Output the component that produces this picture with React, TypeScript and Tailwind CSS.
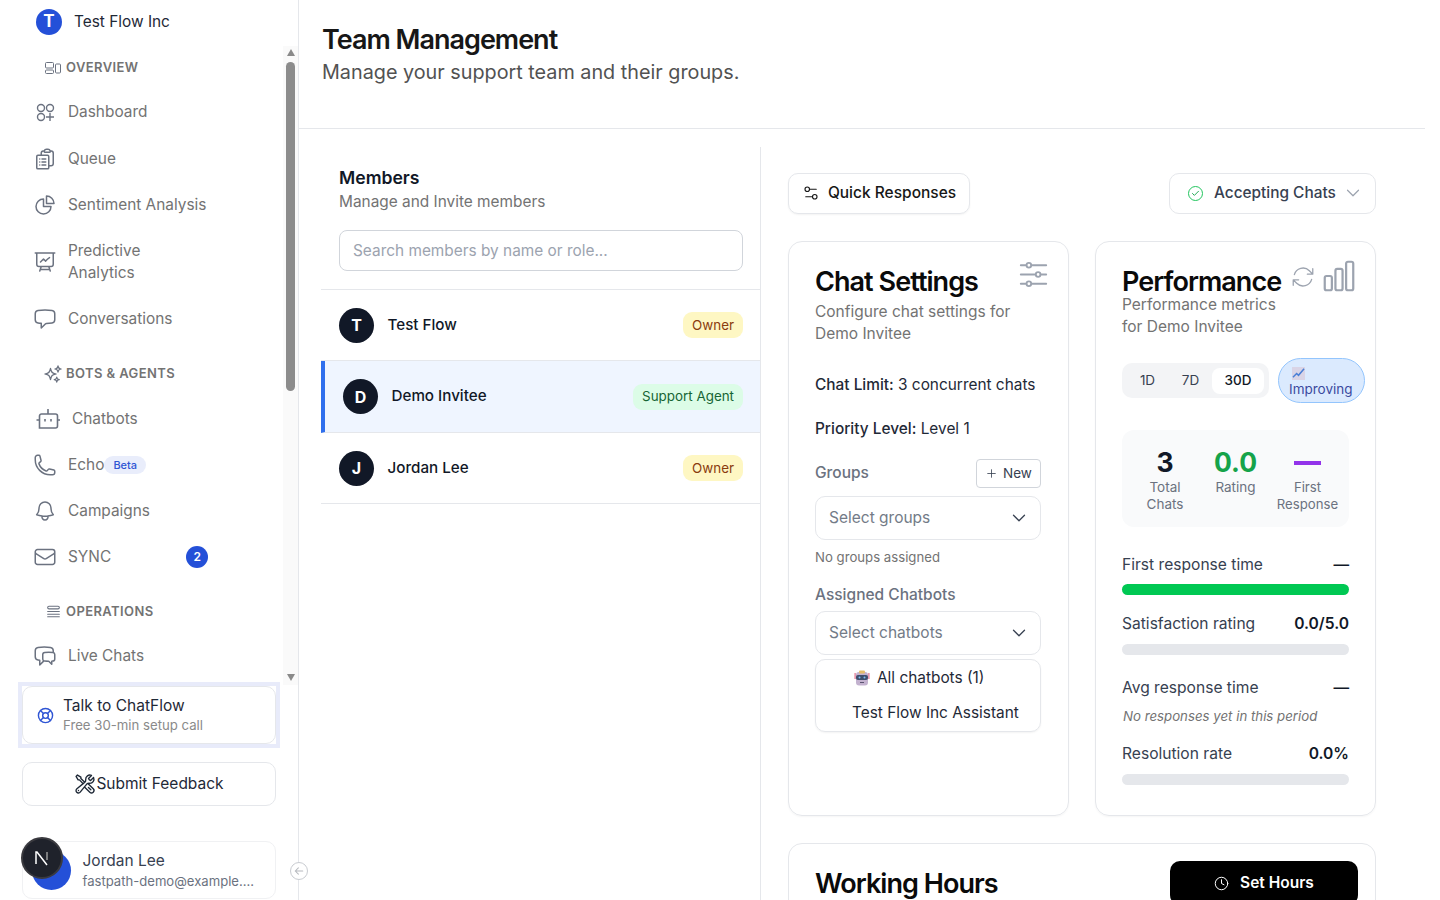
import { Check, ChevronDown, Clock, LifeBuoy, Plus, Settings2 } from 'lucide-react';
import {
  HiOutlineAdjustmentsHorizontal,
  HiOutlineArrowLeft,
  HiOutlineArrowPath,
  HiOutlineBell,
  HiOutlineChartBar,
  HiOutlineChartPie,
  HiOutlineChatBubbleLeft,
  HiOutlineChatBubbleLeftRight,
  HiOutlineClipboardDocumentList,
  HiOutlineEnvelope,
  HiOutlinePhone,
  HiOutlinePresentationChartLine,
  HiOutlineQueueList,
  HiOutlineSparkles,
  HiOutlineWrenchScrewdriver,
} from 'react-icons/hi2';
import type { ReactNode } from 'react';

function DashIcon() {
  return (
    <svg viewBox="0 0 24 24" fill="none" stroke="currentColor" strokeWidth="1.4" className="h-[24px] w-[24px] shrink-0">
      <circle cx="8" cy="8" r="3.5" />
      <circle cx="17" cy="8" r="3.5" />
      <circle cx="8" cy="17" r="3.5" />
      <path d="M17 13v8M13 17h8" />
    </svg>
  );
}

function OverviewIcon() {
  return (
    <svg viewBox="0 0 16 12" fill="none" stroke="currentColor" strokeWidth="1" className="h-[12px] w-[16px] shrink-0">
      <rect x="0.5" y="0.5" width="8" height="5.5" rx="1" />
      <rect x="0.5" y="8" width="8" height="3.5" rx="1" />
      <rect x="10.5" y="2" width="5" height="9" rx="1" />
    </svg>
  );
}

function BotIcon() {
  return (
    <svg viewBox="0 0 24 22" fill="none" stroke="currentColor" strokeWidth="1.6" className="h-[22px] w-[24px] shrink-0">
      <path d="M12 1v5" />
      <path d="M5.5 6h14a2 2 0 0 1 2 2v10a2 2 0 0 1-2 2H3.5V8a2 2 0 0 1 2-2z" />
      <path d="M0.5 12h3M21.5 12h2.5" />
      <path d="M9 11v2.5M15 11v2.5" />
    </svg>
  );
}

function NextLogo() {
  return (
    <svg viewBox="0 0 16 16" fill="none" className="h-[16px] w-[16px]">
      <path d="M2 14V2h1l10 13" stroke="#fff" strokeWidth="1.5" />
      <path d="M13 2v8" stroke="#9a9a9a" strokeWidth="1.5" />
    </svg>
  );
}

function RobotEmoji() {
  return (
    <svg viewBox="0 0 16 16" className="h-[16px] w-[16px] shrink-0">
      <rect x="0.5" y="3" width="1.2" height="6" fill="#e0708c" />
      <rect x="14.3" y="3" width="1.2" height="6" fill="#e0708c" />
      <rect x="2" y="2" width="12" height="13.5" rx="3" fill="#c3b2cf" />
      <rect x="5" y="0.5" width="6" height="3" rx="1" fill="#e6bd6a" />
      <rect x="2" y="5" width="12" height="5" rx="2" fill="#3f4f6d" />
      <circle cx="5.5" cy="7.5" r="1" fill="#7cc0f0" />
      <circle cx="10.5" cy="7.5" r="1" fill="#7cc0f0" />
      <rect x="6" y="12" width="4" height="1" fill="#5c5470" />
    </svg>
  );
}

function NavItem({ icon, label, h = 'h-[46px]', children }: { icon: ReactNode; label: ReactNode; h?: string; children?: ReactNode }) {
  return (
    <div className={`flex items-center pl-[36px] text-[#6b7280] ${h}`}>
      <span className="-ml-[3px] flex w-[35px] shrink-0 items-center">{icon}</span>
      <span className="text-[15.4px] leading-[22px] text-[#737373]">{label}</span>
      {children}
    </div>
  );
}

function SectionLabel({ icon, label, className }: { icon: ReactNode; label: string; className: string }) {
  return (
    <div className={`flex items-center pl-[45px] text-[#6b7280] ${className}`}>
      <span className="flex w-[21px] shrink-0 items-center">{icon}</span>
      <span className="text-[13px] font-semibold tracking-[0.4px] text-[#737373]">{label}</span>
    </div>
  );
}

function Sidebar() {
  const ic = 'h-[24px] w-[24px] shrink-0';
  return (
    <aside className="relative flex h-[900px] w-[299px] shrink-0 flex-col border-r border-[#e5e7eb] bg-white">
      <div className="flex h-[46px] shrink-0 items-center pb-[2px] pl-[36px]">
        <div className="flex h-[26px] w-[26px] items-center justify-center rounded-full bg-[#2450d8] text-[17px] font-bold text-white">T</div>
        <span className="ml-[12px] text-[15.4px] text-[#1f2937]">Test Flow Inc</span>
      </div>
      <div className="flex h-[636px] shrink-0">
        <nav className="h-full w-[283px] overflow-hidden">
          <SectionLabel icon={<OverviewIcon />} label="OVERVIEW" className="h-[43px]" />
          <NavItem icon={<DashIcon />} label="Dashboard" />
          <NavItem icon={<HiOutlineClipboardDocumentList className={ic} />} label="Queue" h="h-[47px]" />
          <NavItem icon={<HiOutlineChartPie className={ic} />} label="Sentiment Analysis" />
          <NavItem icon={<HiOutlinePresentationChartLine className={ic} />} label={<>Predictive<br />Analytics</>} h="h-[66px] pt-[2px]" />
          <NavItem icon={<HiOutlineChatBubbleLeft className={ic} />} label="Conversations" h="mt-[2px] h-[46px]" />
          <SectionLabel icon={<HiOutlineSparkles className="-ml-[2px] h-[20px] w-[20px]" />} label="BOTS & AGENTS" className="mt-[9px] h-[45px]" />
          <div className="flex h-[46px] items-center pl-[36px] text-[#6b7280]">
            <span className="flex w-[36px] shrink-0 items-center"><BotIcon /></span>
            <span className="text-[15.4px] text-[#737373]">Chatbots</span>
          </div>
          <NavItem icon={<HiOutlinePhone className={ic} />} label="Echo">
            <span className="rounded-full bg-[#e9edfb] px-[9px] py-[1px] text-[11px] font-medium text-[#2f55d4]">Beta</span>
          </NavItem>
          <NavItem icon={<HiOutlineBell className={ic} />} label="Campaigns" />
          <NavItem icon={<HiOutlineEnvelope className={ic} />} label="SYNC">
            <span className="ml-[75px] flex h-[22px] w-[22px] items-center justify-center rounded-full bg-[#2450d8] text-[12px] font-semibold text-white">2</span>
          </NavItem>
          <SectionLabel icon={<HiOutlineQueueList className="h-[17px] w-[17px]" />} label="OPERATIONS" className="mt-[10px] h-[43px]" />
          <NavItem icon={<HiOutlineChatBubbleLeftRight className={ic} />} label="Live Chats" />
        </nav>
        <div className="flex h-[639px] w-[15px] shrink-0 flex-col items-center bg-[#fafafa]">
          <div className="mt-[3px] h-0 w-0 border-x-[4.5px] border-b-[7px] border-x-transparent border-b-[#8a8a8a]" />
          <div className="mt-[6px] h-[329px] w-[9px] rounded-full bg-[#8c8c8c]" />
          <div className="mt-auto mb-[4px] h-0 w-0 border-x-[4.5px] border-t-[7px] border-x-transparent border-t-[#8a8a8a]" />
        </div>
      </div>
      <div className="mx-[18px] box-border h-[66px] w-[262px] border-[4px] border-[#e8ebfa] bg-white">
        <div className="flex h-full items-center rounded-[10px] border border-[#e5e7eb] pl-[14px]">
          <LifeBuoy className="h-[17px] w-[17px] text-[#2f55d4]" strokeWidth={2} />
          <div className="ml-[9px]">
            <div className="text-[15.5px] leading-[20px] text-[#1f2937]">Talk to ChatFlow</div>
            <div className="text-[13.2px] leading-[18px] text-[#8a8a8a]">Free 30-min setup call</div>
          </div>
        </div>
      </div>
      <div className="mx-[22px] mt-[14px] flex h-[44px] w-[254px] items-center justify-center rounded-[10px] border border-[#e5e7eb] text-[15.5px] text-[#1f2937]">
        <HiOutlineWrenchScrewdriver className="h-[22px] w-[22px]" />
        <span>Submit Feedback</span>
      </div>
      <div className="mx-[22px] mt-[35px] flex h-[58px] w-[254px] items-center rounded-[10px] border border-[#f0f1f3] pl-[59.5px] pt-[2px]">
        <div>
          <div className="text-[15.5px] leading-[20px] text-[#374151]">Jordan Lee</div>
          <div className="w-[180px] text-[13.1px] leading-[20px] text-[#6b7280]">fastpath-demo@example....</div>
        </div>
      </div>
      <div className="absolute left-[32px] top-[851px] h-[39px] w-[39px] rounded-full bg-[#2450d8]" />
      <div className="absolute left-[21px] top-[837px] flex h-[42px] w-[42px] items-center justify-center rounded-full border-2 border-[#3a3a3f] bg-[#1f222b]">
        <NextLogo />
      </div>
      <div className="absolute left-[290px] top-[862px] flex h-[18px] w-[18px] items-center justify-center rounded-full border border-[#c9ccd1] bg-white text-[#b5b8bd]">
        <HiOutlineArrowLeft className="h-[10px] w-[10px]" strokeWidth={2.5} />
      </div>
    </aside>
  );
}

function Member({ initial, name, role, active }: { initial: string; name: string; role: string; active?: boolean }) {
  const badge = role === 'Owner' ? 'bg-[#fef7c3] text-[#8a3c0e]' : 'bg-[#dcfce7] text-[#166534]';
  return (
    <div className={`flex items-center border-b border-[#e5e7eb] pl-[18px] pr-[17px] ${active ? 'h-[72px] border-l-[4px] border-l-[#2f6fed] bg-[#eff5ff]' : 'h-[71px]'}`}>
      <div className="flex h-[35px] w-[35px] items-center justify-center rounded-full bg-[#111827] text-[16px] font-bold text-white">{initial}</div>
      <span className="ml-[13.5px] text-[15.2px] font-[450] text-[#111827]">{name}</span>
      <span className={`ml-auto flex h-[26px] items-center rounded-[9px] px-[9px] text-[13.4px] ${badge}`}>{role}</span>
    </div>
  );
}

function Select({ label }: { label: string }) {
  return (
    <div className="flex h-[44px] items-center justify-between rounded-[10px] border border-[#e5e7eb] pl-[13px] pr-[10px]">
      <span className="text-[15.5px] text-[#737b87]">{label}</span>
      <ChevronDown className="h-[22px] w-[22px] text-[#374151]" strokeWidth={1.4} />
    </div>
  );
}

function ChatSettings() {
  return (
    <section className="h-[575px] w-[281px] rounded-[14px] border border-[#e5e7eb] pl-[26px] pr-[27px] pt-[22px] shadow-[0_1px_2px_rgba(0,0,0,0.04)]">
      <div className="flex h-[36px] items-start justify-between">
        <h3 className="text-[27px] font-semibold leading-[36px] tracking-[-0.95px] text-[#0a0a0a]">Chat Settings</h3>
        <HiOutlineAdjustmentsHorizontal className="-mr-[11px] -mt-[8px] h-[37px] w-[37px] shrink-0 text-[#9ca3af]" strokeWidth={1.2} />
      </div>
      <p className="mt-[1px] text-[15.5px] leading-[22px] text-[#737373]">Configure chat settings for<br />Demo Invitee</p>
      <p className="mt-[29px] text-[15.4px] leading-[22px] text-[#1f2937]"><span className="font-medium">Chat Limit:</span> 3 concurrent chats</p>
      <p className="mt-[22px] text-[15.4px] leading-[22px] text-[#1f2937]"><span className="font-medium">Priority Level:</span> Level 1</p>
      <div className="mt-[19px] flex items-center justify-between">
        <span className="pb-[2px] text-[15.5px] font-medium text-[#6b7280]">Groups</span>
        <span className="flex h-[29px] w-[65px] items-center justify-center gap-[5px] rounded-[4px] border border-[#d1d5db] text-[13.5px] text-[#374151]">
          <Plus className="h-[13px] w-[13px]" strokeWidth={1.5} />New
        </span>
      </div>
      <div className="mt-[8px]"><Select label="Select groups" /></div>
      <p className="mt-[8px] text-[13.2px] leading-[18px] text-[#737373]">No groups assigned</p>
      <p className="mt-[18px] text-[15.5px] font-medium leading-[22px] text-[#6b7280]">Assigned Chatbots</p>
      <div className="mt-[5px]"><Select label="Select chatbots" /></div>
      <div className="mt-[4px] h-[73px] rounded-[10px] border border-[#e5e7eb] pl-[36px] pt-[6px] text-[15.4px] text-[#1f2937] shadow-[0_1px_2px_rgba(0,0,0,0.05)]">
        <div className="flex h-[24px] items-center gap-[7px] pl-[2px]">
          <RobotEmoji />
          <span>All chatbots (1)</span>
        </div>
        <div className="mt-[12px] leading-[22px]">Test Flow Inc Assistant</div>
      </div>
    </section>
  );
}

function Metric({ label, value, bar }: { label: string; value: string; bar?: boolean }) {
  return (
    <div>
      <div className="flex items-center justify-between text-[15.6px] leading-[22px]">
        <span className="text-[#374151]">{label}</span>
        <span className="font-semibold text-[#111827]">{value}</span>
      </div>
      {bar === true && <div className="mt-[8px] h-[11px] rounded-full bg-[#00c853]" />}
      {bar === false && <div className="mt-[9px] h-[11px] rounded-full bg-[#e5e7eb]" />}
    </div>
  );
}

function Performance() {
  return (
    <section className="h-[575px] w-[281px] rounded-[14px] border border-[#e5e7eb] pl-[26px] pr-[26px] pt-[28px] shadow-[0_1px_2px_rgba(0,0,0,0.04)]">
      <div className="flex h-[24px] items-start">
        <h3 className="shrink-0 text-[27px] font-semibold leading-[24px] tracking-[-0.95px] text-[#0a0a0a]">Performance</h3>
        <HiOutlineArrowPath className="ml-[9px] -mt-[6px] h-[26px] w-[26px] shrink-0 text-[#9ca3af]" strokeWidth={1.2} />
        <HiOutlineChartBar className="ml-[4px] -mt-[13px] h-[38px] w-[38px] shrink-0 text-[#9ca3af]" strokeWidth={1.4} />
      </div>
      <p className="text-[15.5px] leading-[22px] text-[#737373]">Performance metrics<br />for Demo Invitee</p>
      <div className="mt-[20px] flex items-center">
        <div className="flex h-[35px] w-[147px] items-center rounded-[10px] bg-[#f3f4f6] pl-[4px] text-[13.5px] text-[#374151]">
          <span className="w-[43px] text-center">1D</span>
          <span className="w-[43px] text-center">7D</span>
          <span className="flex h-[26px] w-[52px] items-center justify-center rounded-[8px] bg-white font-medium text-[#111827]">30D</span>
        </div>
        <div className="ml-[9px] -mr-[16px] h-[45px] w-[87px] shrink-0 rounded-[23px] border border-[#93c5fd] bg-[#dbeafe] pl-[10px] pt-[8px] text-[#3b4a9f]">
          <svg viewBox="0 0 14 14" className="ml-[3px] h-[13px] w-[13px]">
            <rect x="0" y="0" width="14" height="14" fill="#d9d4e6" />
            <path d="M1 11l4-4 2 2 6-7" fill="none" stroke="#4a7fd6" strokeWidth="1.6" />
          </svg>
          <div className="text-[13.5px] leading-[18px]">Improving</div>
        </div>
      </div>
      <div className="mt-[27px] flex h-[97px] w-[227px] rounded-[12px] bg-[#f9fafb] pt-[16px] text-center text-[13.5px] leading-[17px] text-[#6b7280]">
        <div className="w-[86px] shrink-0">
          <div className="text-[26.5px] font-bold leading-[33px] text-[#111827]">3</div>
          <div>Total<br />Chats</div>
        </div>
        <div className="w-[55px] shrink-0">
          <div className="text-[26.5px] font-bold leading-[33px] text-[#16a34a]">0.0</div>
          <div>Rating</div>
        </div>
        <div className="w-[89px] shrink-0 text-[13.2px]">
          <div className="flex h-[33px] items-center justify-center"><div className="h-[4px] w-[27px] bg-[#9333ea]" /></div>
          <div>First<br />Response</div>
        </div>
      </div>
      <div className="mt-[27px]"><Metric label="First response time" value="—" bar /></div>
      <div className="mt-[18px]"><Metric label="Satisfaction rating" value="0.0/5.0" bar={false} /></div>
      <div className="mt-[22px]"><Metric label="Avg response time" value="—" /></div>
      <p className="ml-[1px] mt-[8px] text-[13.25px] italic leading-[18px] text-[#737373]">No responses yet in this period</p>
      <div className="mt-[18px]"><Metric label="Resolution rate" value="0.0%" bar={false} /></div>
    </section>
  );
}

export default function App() {
  return (
    <div className="flex h-[900px] overflow-hidden bg-white font-['Inter',sans-serif]">
      <Sidebar />
      <main className="w-[1126px] shrink-0">
        <header className="h-[129px] border-b border-[#e5e7eb] pl-[23px] pt-[23px]">
          <h1 className="text-[27px] font-semibold leading-[34px] tracking-[-1px] text-[#171717]">Team Management</h1>
          <p className="mt-[1px] text-[19.8px] leading-[28px] text-[#525252]">Manage your support team and their groups.</p>
        </header>
        <div className="flex">
          <div className="ml-[22px] mt-[18px] h-[753px] w-[440px] shrink-0 border-r border-[#e5e7eb] pt-[19px]">
            <div className="pl-[18px] pr-[17px]">
              <h2 className="text-[17.6px] font-semibold leading-[24px] text-[#111827]">Members</h2>
              <p className="mt-[1px] text-[15.4px] leading-[22px] text-[#737373]">Manage and Invite members</p>
              <div className="mt-[17px] flex h-[41px] items-center rounded-[8px] border border-[#d1d5db] pl-[13px] text-[15.4px] text-[#9ca3af]">Search members by name or role...</div>
            </div>
            <div className="mt-[18px] border-t border-[#e5e7eb]">
              <Member initial="T" name="Test Flow" role="Owner" />
              <Member initial="D" name="Demo Invitee" role="Support Agent" active />
              <Member initial="J" name="Jordan Lee" role="Owner" />
            </div>
          </div>
          <div className="ml-[27px] w-[588px] shrink-0 pt-[44px]">
            <div className="flex items-center justify-between">
              <div className="flex h-[41px] w-[182px] items-center justify-center gap-[8px] rounded-[10px] border border-[#e5e7eb] pb-[1px] text-[15.5px] font-medium text-[#171717] shadow-[0_1px_2px_rgba(0,0,0,0.05)]">
                <Settings2 className="h-[18px] w-[18px]" strokeWidth={1.5} />
                Quick Responses
              </div>
              <div className="flex h-[41px] w-[207px] items-center rounded-[10px] border border-[#e5e7eb] pb-[1px] pl-[18px] text-[15.4px] font-medium text-[#374151]">
                <span className="flex h-[15px] w-[15px] items-center justify-center rounded-full border-[1.5px] border-[#22c55e]">
                  <Check className="h-[9px] w-[9px] text-[#16a34a]" strokeWidth={2.5} />
                </span>
                <span className="ml-[11px]">Accepting Chats</span>
                <ChevronDown className="ml-[6px] h-[22px] w-[22px] text-[#9ca3af]" strokeWidth={1.3} />
              </div>
            </div>
            <div className="mt-[27px] flex justify-between">
              <ChatSettings />
              <Performance />
            </div>
            <section className="mt-[27px] flex h-[100px] items-start justify-between rounded-[14px] border border-[#e5e7eb] pl-[26px] pr-[17px] pt-[17px]">
              <h3 className="mt-[9px] text-[27px] font-semibold leading-[28px] tracking-[-0.95px] text-[#0a0a0a]">Working Hours</h3>
              <div className="flex h-[44px] w-[188px] items-center justify-center gap-[11px] rounded-[10px] bg-black text-[15.5px] font-semibold text-white">
                <Clock className="h-[15px] w-[15px]" strokeWidth={1.6} />
                Set Hours
              </div>
            </section>
          </div>
        </div>
      </main>
    </div>
  );
}
